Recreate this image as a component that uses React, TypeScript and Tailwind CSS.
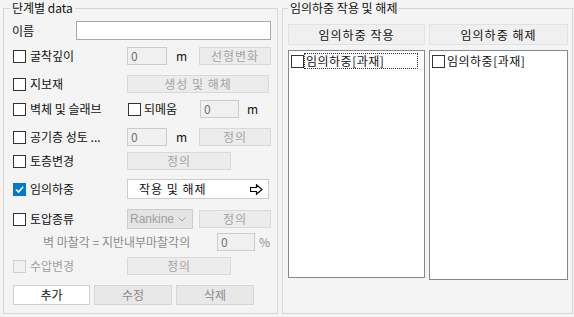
import { ReactNode } from "react";
import clsx from "clsx";

function Box({ checked, disabled }: { checked?: boolean; disabled?: boolean }) {
  if (checked) {
    return (
      <span className="flex h-[13px] w-[13px] shrink-0 items-center justify-center bg-[#0078d7]">
        <svg width="11" height="11" viewBox="0 0 11 11">
          <path d="M2 5.5 L4.5 8 L9.2 2.8" stroke="white" strokeWidth="1.7" fill="none" />
        </svg>
      </span>
    );
  }
  return (
    <span
      className={clsx(
        "block h-[13px] w-[13px] shrink-0 border",
        disabled ? "border-[#d0d0d0] bg-[#f0f0f0]" : "border-[#333333] bg-white"
      )}
    />
  );
}

function CheckLabel({ label, checked, disabled }: { label: string; checked?: boolean; disabled?: boolean }) {
  return (
    <div className="flex items-center gap-[4px] pl-[1px]">
      <Box checked={checked} disabled={disabled} />
      <span className={disabled ? "text-[#a0a0a0]" : "text-[#111]"}>{label}</span>
    </div>
  );
}

function NumBox({ w }: { w: string }) {
  return (
    <div className={clsx("h-[18px] border border-[#cccccc] bg-[#f0f0f0] pl-[3px] text-[#707070] leading-[15px]", w)}>
      0
    </div>
  );
}

function DisBtn({ children, w }: { children: ReactNode; w: string }) {
  return (
    <div
      className={clsx(
        "flex h-[18px] items-center justify-center border border-[#d9d9d9] bg-[#ececec] tracking-[1px] text-[#a3a3a3]",
        w
      )}
    >
      {children}
    </div>
  );
}

function Row({ top, h, children }: { top: string; h: string; children: ReactNode }) {
  return <div className={clsx("flex items-center", top, h)}>{children}</div>;
}

function LabelCol({ children }: { children: ReactNode }) {
  return <div className="w-[115px] shrink-0">{children}</div>;
}

function ArrowIcon() {
  return (
    <svg width="13" height="11" viewBox="0 0 13 11">
      <path
        d="M0.5 3.5 H6.5 V0.8 L12 5.5 L6.5 10.2 V7.5 H0.5 Z"
        fill="white"
        stroke="black"
        strokeWidth="1.2"
        strokeLinejoin="miter"
      />
    </svg>
  );
}

export default function App() {
  return (
    <div className="flex h-[317px] w-[574px] gap-[4px] bg-[#f4f4f4] pl-[3px] pt-[1px] font-['Noto_Sans_CJK_KR','Noto_Sans',sans-serif] text-[12px] leading-[14px] text-[#111]">
      {/* 단계별 data */}
      <fieldset className="h-[313px] w-[275px] border border-[#d6d6d6]">
        <legend className="ml-[6px] px-[2px]">단계별 data</legend>
        <div className="flex flex-col pl-[8px]">
          <Row top="mt-[6px]" h="h-[19px]">
            <div className="w-[64px] shrink-0">이름</div>
            <div className="h-[19px] w-[195px] border border-[#a8a8a8] bg-white" />
          </Row>
          <Row top="mt-[7px]" h="h-[18px]">
            <LabelCol>
              <CheckLabel label="굴착깊이" />
            </LabelCol>
            <NumBox w="w-[40px]" />
            <span className="ml-[9px] w-[23px]">m</span>
            <DisBtn w="w-[72px]">선형변화</DisBtn>
          </Row>
          <Row top="mt-[10px]" h="h-[18px]">
            <LabelCol>
              <CheckLabel label="지보재" />
            </LabelCol>
            <DisBtn w="w-[142px]">생성 및 해체</DisBtn>
          </Row>
          <Row top="mt-[7px]" h="h-[18px]">
            <LabelCol>
              <CheckLabel label="벽체 및 슬래브" />
            </LabelCol>
            <div className="flex w-[73px] items-center gap-[3px] pl-[1px]">
              <Box />
              <span>되메움</span>
            </div>
            <NumBox w="w-[39px]" />
            <span className="ml-[8px]">m</span>
          </Row>
          <Row top="mt-[10px]" h="h-[18px]">
            <LabelCol>
              <CheckLabel label="공기층 성토 ..." />
            </LabelCol>
            <NumBox w="w-[40px]" />
            <span className="ml-[9px] w-[23px]">m</span>
            <DisBtn w="w-[72px]">정의</DisBtn>
          </Row>
          <Row top="mt-[6px]" h="h-[18px]">
            <LabelCol>
              <CheckLabel label="토층변경" />
            </LabelCol>
            <DisBtn w="w-[104px]">정의</DisBtn>
          </Row>
          <Row top="mt-[9px]" h="h-[20px]">
            <LabelCol>
              <CheckLabel label="임의하중" checked />
            </LabelCol>
            <div className="flex h-[20px] w-[142px] items-center border border-[#cccccc] bg-white pl-[11px] pr-[5px] tracking-[1px]">
              <span className="flex-1">작용 및 해제</span>
              <ArrowIcon />
            </div>
          </Row>
          <Row top="mt-[10px]" h="h-[20px]">
            <LabelCol>
              <CheckLabel label="토압종류" />
            </LabelCol>
            <div className="flex h-[20px] w-[66px] items-center border border-[#cccccc] bg-[#e4e4e4] pl-[2px] text-[#a0a0a0]">
              <span className="font-['Liberation_Sans',sans-serif]">Rankine</span>
              <svg className="ml-[4px]" width="8" height="5" viewBox="0 0 8 5">
                <path d="M0.5 0.5 L4 4 L7.5 0.5" stroke="#a0a0a0" fill="none" />
              </svg>
            </div>
            <div className="ml-[6px]" />
            <DisBtn w="w-[72px]">정의</DisBtn>
          </Row>
          <Row top="mt-[4px]" h="h-[18px]">
            <span className="ml-[31px] w-[174px] text-[#8c8c8c]">벽 마찰각 = 지반내부마찰각의</span>
            <NumBox w="w-[38px]" />
            <span className="ml-[4px] text-[#8c8c8c]">%</span>
          </Row>
          <Row top="mt-[6px]" h="h-[18px]">
            <LabelCol>
              <CheckLabel label="수압변경" disabled />
            </LabelCol>
            <DisBtn w="w-[104px]">정의</DisBtn>
          </Row>
          <div className="mt-[10px] flex h-[20px] gap-[4px] pl-[1px]">
            <div className="flex w-[77px] items-center justify-center border border-[#cfcfcf] bg-white">추가</div>
            <div className="flex w-[78px] items-center justify-center border border-[#d6d6d6] bg-[#e8e8e8] text-[#8a8a8a]">
              수정
            </div>
            <div className="flex w-[78px] items-center justify-center border border-[#d6d6d6] bg-[#e8e8e8] text-[#8a8a8a]">
              삭제
            </div>
          </div>
        </div>
      </fieldset>

      {/* 임의하중 작용 및 해제 */}
      <fieldset className="h-[313px] w-[291px] border border-[#d6d6d6]">
        <legend className="ml-[5px] px-[2px]">임의하중 작용 및 해제</legend>
        <div className="flex gap-[4px] pl-[5px] pt-[9px]">
          <div className="flex w-[137px] flex-col gap-[5px]">
            <div className="flex h-[21px] items-center justify-center border border-[#e2e2e2] bg-[#f0f0f0] tracking-[1px]">
              임의하중 작용
            </div>
            <div className="h-[228px] border border-[#828790] bg-white pl-[2px] pt-[3px]">
              <div className="flex items-center gap-[1px]">
                <Box />
                <span className="outline-1 outline-dotted outline-[#333] pl-[1px] w-[112px] tracking-[0.5px]">
                  임의하중[과재]
                </span>
              </div>
            </div>
          </div>
          <div className="flex w-[139px] flex-col gap-[5px]">
            <div className="flex h-[21px] items-center justify-center border border-[#e2e2e2] bg-[#f0f0f0] tracking-[1px]">
              임의하중 해제
            </div>
            <div className="h-[230px] border border-[#828790] bg-white pl-[2px] pt-[3px]">
              <div className="flex items-center gap-[1px]">
                <Box />
                <span className="pl-[1px] tracking-[0.5px]">임의하중[과재]</span>
              </div>
            </div>
          </div>
        </div>
      </fieldset>
    </div>
  );
}
